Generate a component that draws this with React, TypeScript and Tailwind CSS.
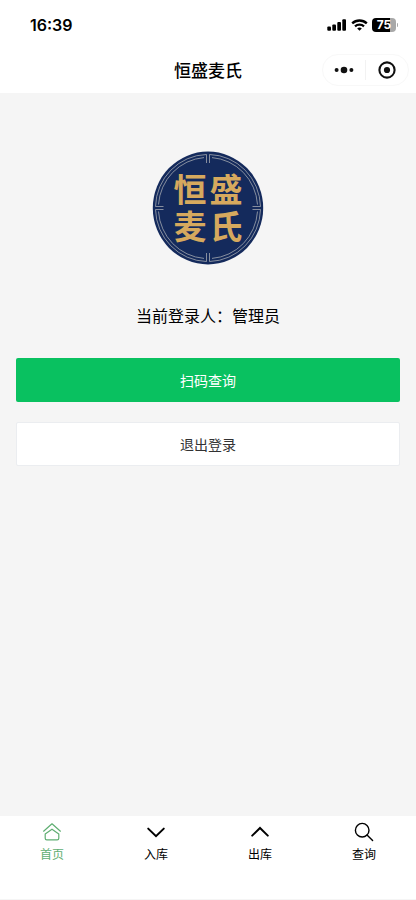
import { useState } from "react";

type TabId = "home" | "in" | "out" | "search";

const TABS: { id: TabId; label: string }[] = [
  { id: "home", label: "首页" },
  { id: "in", label: "入库" },
  { id: "out", label: "出库" },
  { id: "search", label: "查询" },
];

function StatusBar() {
  return (
    <div className="flex h-12 items-center justify-between pr-[18px] pl-[30px] pt-[2px]">
      <span className="font-[Inter,sans-serif] text-base font-semibold">16:39</span>
      <div className="flex items-center gap-1">
        <svg width="20" height="12" viewBox="0 0 20 12" fill="currentColor" aria-hidden="true">
          <rect x="0.3" y="7.5" width="3.7" height="4.3" rx="1" />
          <rect x="5.3" y="5.5" width="3.7" height="6.3" rx="1" />
          <rect x="10.3" y="3" width="3.7" height="8.8" rx="1" />
          <rect x="15.3" y="0.3" width="3.7" height="11.5" rx="1" />
        </svg>
        <svg width="17" height="12" viewBox="0 0 17 12" fill="none" stroke="currentColor" strokeWidth="2.3" aria-hidden="true">
          <path d="M1.2 4.4C5.2 0.5 11.8 0.5 15.8 4.4" />
          <path d="M4 7.3C6.5 5 10.5 5 13 7.3" />
          <path d="M8.5 11.8L6.2 9.5C7.4 8.3 9.6 8.3 10.8 9.5Z" fill="currentColor" stroke="none" />
        </svg>
        <div className="flex items-center gap-px">
          <div className="flex h-[14px] w-6 items-center justify-center rounded-[4px] bg-linear-to-r from-black from-75% to-[#a8a8a8] to-75% font-[Inter,sans-serif] text-[12px] leading-none font-bold text-white">
            75
          </div>
          <div className="h-1 w-px rounded-r bg-[#a8a8a8]" />
        </div>
      </div>
    </div>
  );
}

function NavBar() {
  return (
    <header className="relative flex h-[45px] items-center justify-center pb-[2px]">
      <h1 className="text-[17px] font-medium">恒盛麦氏</h1>
      <div className="absolute top-[6px] right-[7px] flex h-8 w-[87px] items-center rounded-full border border-[#f8f8f8]">
        <button type="button" aria-label="更多" className="flex flex-1 justify-center">
          <svg width="20" height="8" viewBox="0 0 20 8" fill="#111">
            <circle cx="2.6" cy="4" r="2" />
            <circle cx="10" cy="4" r="3.3" />
            <circle cx="17.4" cy="4" r="2" />
          </svg>
        </button>
        <span className="h-5 w-px bg-[#f2f2f2]" />
        <button type="button" aria-label="关闭" className="flex flex-1 justify-center">
          <svg width="18" height="18" viewBox="0 0 18 18">
            <circle cx="9" cy="9" r="7.6" fill="none" stroke="#111" strokeWidth="2.1" />
            <circle cx="9" cy="9" r="3.1" fill="#111" />
          </svg>
        </button>
      </div>
    </header>
  );
}

function Logo() {
  return (
    <svg
      width="112"
      height="114"
      viewBox="0 0 112 114"
      className="font-['Liberation_Serif','Noto_Sans_CJK_SC',serif]"
      role="img"
      aria-label="恒盛麦氏"
    >
      <ellipse cx="56" cy="57" rx="55.2" ry="56.4" fill="#142a5c" />
      <g fill="none" stroke="#a3a8b0" strokeWidth="0.8">
        <path d="M54.5 3.5A52.5 53.5 0 0 0 3.5 55.5H11.5M54.5 3.5V12" />
        <path d="M57.5 3.5A52.5 53.5 0 0 1 108.5 55.5H100.5M57.5 3.5V12" />
        <path d="M54.5 110.5A52.5 53.5 0 0 1 3.5 58.5H11.5M54.5 110.5V102" />
        <path d="M57.5 110.5A52.5 53.5 0 0 0 108.5 58.5H100.5M57.5 110.5V102" />
        <path d="M52 6.6A49.5 50.5 0 0 0 6.5 53.5M60 6.6A49.5 50.5 0 0 1 105.5 53.5" />
        <path d="M52 107.4A49.5 50.5 0 0 1 6.5 60.5M60 107.4A49.5 50.5 0 0 0 105.5 60.5" />
      </g>
      <g fill="#d6a95e" fontSize="33" fontWeight="700" textAnchor="middle">
        <text x="38" y="51">恒</text>
        <text x="74" y="51">盛</text>
        <text x="38" y="88">麦</text>
        <text x="74" y="88">氏</text>
      </g>
    </svg>
  );
}

function TabIcon({ id }: { id: TabId }) {
  return (
    <svg
      width="20"
      height="20"
      viewBox="0 0 20 20"
      fill="none"
      stroke="currentColor"
      strokeLinecap="round"
      strokeLinejoin="round"
      aria-hidden="true"
    >
      {id === "home" && (
        <g strokeWidth="1.2">
          <path d="M1.6 9.2L10 1.8L18.4 9.2" />
          <path d="M3.2 12L10 7.2L16.8 12V16.2Q16.8 17.8 15.2 17.8H4.8Q3.2 17.8 3.2 16.2Z" />
        </g>
      )}
      {id === "in" && <path d="M2.2 6.6L10 14.2L17.8 6.6" strokeWidth="2" strokeLinejoin="miter" />}
      {id === "out" && <path d="M2.2 13.6L10 6L17.8 13.6" strokeWidth="2" strokeLinejoin="miter" />}
      {id === "search" && (
        <g strokeWidth="1.4">
          <circle cx="8.2" cy="8.2" r="6.8" />
          <path d="M13 13L18.6 18.6" />
        </g>
      )}
    </svg>
  );
}

export default function App() {
  const [activeTab, setActiveTab] = useState<TabId>("home");

  return (
    <div className="flex min-h-screen flex-col bg-white font-['Noto_Sans_CJK_SC',sans-serif] text-black">
      <StatusBar />
      <NavBar />

      <main className="flex flex-1 flex-col items-center bg-[#f5f5f5] px-4 pt-[58px]">
        <Logo />
        <p className="mt-[38px] text-base leading-6">当前登录人：管理员</p>
        <button
          type="button"
          className="mt-[31px] h-11 w-full rounded-[2px] bg-[#09c160] text-sm text-white"
        >
          扫码查询
        </button>
        <button
          type="button"
          className="mt-5 h-11 w-full rounded-[2px] border border-[#ebedf0] bg-white text-sm text-[#323233]"
        >
          退出登录
        </button>
      </main>

      <nav className="grid h-[84px] grid-cols-4 items-start border-b border-[#f5f5f5] pt-[6px]">
        {TABS.map((tab) => (
          <button
            key={tab.id}
            type="button"
            onClick={() => setActiveTab(tab.id)}
            className={`flex flex-col items-center gap-1 text-xs ${
              activeTab === tab.id ? "text-[#5fae72]" : "text-black"
            }`}
          >
            <TabIcon id={tab.id} />
            {tab.label}
          </button>
        ))}
      </nav>
    </div>
  );
}
